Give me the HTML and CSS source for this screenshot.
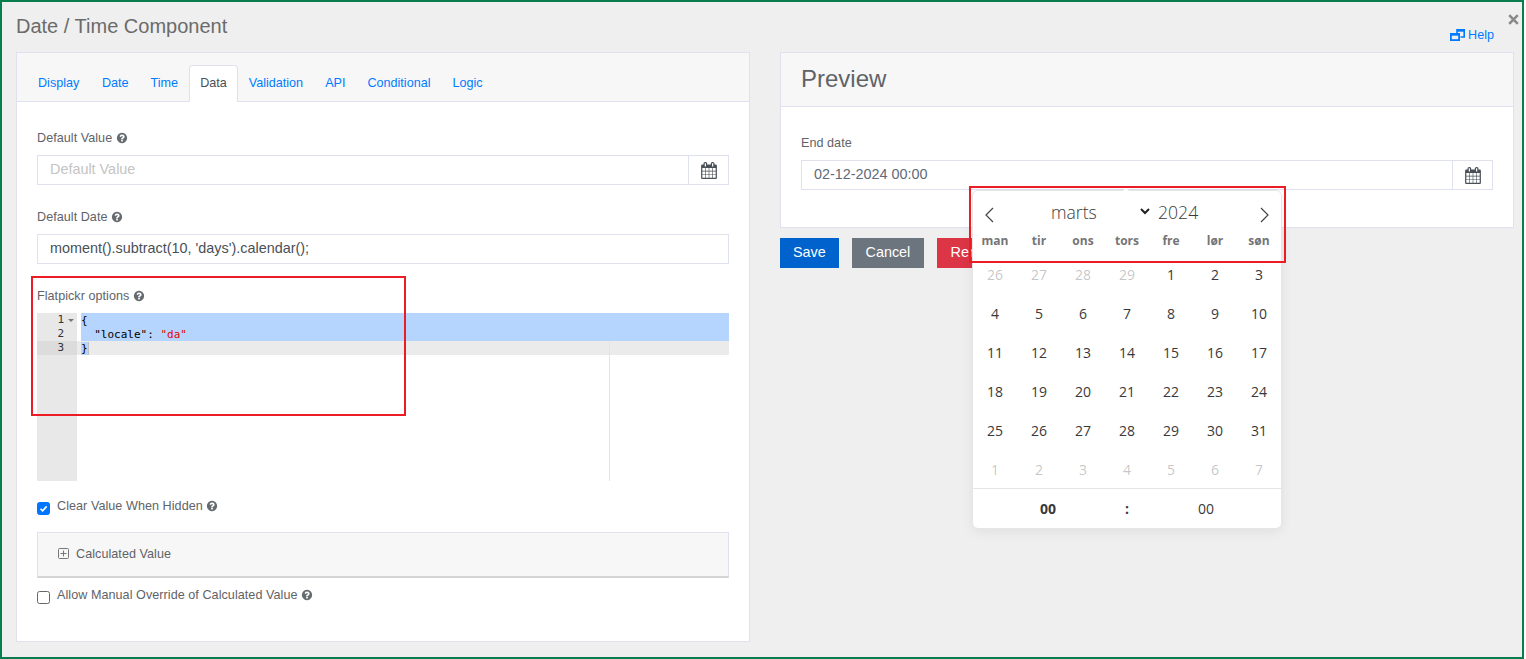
FILE: index.html
```html
<!DOCTYPE html>
<html lang="en">
<head>
<meta charset="utf-8">
<title>Date / Time Component</title>
<link rel="stylesheet" href="styles.css">
</head>
<body>
<svg class="sprite" width="0" height="0" aria-hidden="true">
  <symbol id="q" viewBox="0 0 1792 1792"><path d="M1024 1376v-192q0-14-9-23t-23-9h-192q-14 0-23 9t-9 23v192q0 14 9 23t23 9h192q14 0 23-9t9-23zm256-672q0-88-55.500-163t-138.500-116-170-41q-243 0-371 213-15 24 8 42l132 100q7 6 19 6 16 0 25-12 53-68 86-92 34-24 86-24 48 0 85.500 26t37.500 59q0 38-20 61t-68 45q-63 28-115.500 86.500t-52.500 125.500v36q0 14 9 23t23 9h192q14 0 23-9t9-23q0-19 21.500-49.500t54.500-49.500q32-18 49-28.500t46-35 44.500-48 28-60.500 12.500-81zm384 192q0 209-103 385.500t-279.500 279.500-385.500 103-385.500-103-279.500-279.500-103-385.500 103-385.500 279.500-279.500 385.500-103 385.500 103 279.500 279.500 103 385.500z"/></symbol>
  <symbol id="cal" viewBox="0 0 1664 1792"><path d="M128 1664h288v-288h-288v288zm352 0h320v-288h-320v288zm-352-352h288v-320h-288v320zm352 0h320v-320h-320v320zm-352-384h288v-288h-288v288zm736 736h320v-288h-320v288zm-384-736h320v-288h-320v288zm768 736h288v-288h-288v288zm-384-352h320v-320h-320v320zm-352-864v-288q0-13-9.500-22.500t-22.500-9.500h-64q-13 0-22.500 9.500t-9.500 22.500v288q0 13 9.500 22.500t22.500 9.500h64q13 0 22.500-9.500t9.500-22.500zm736 864h288v-320h-288v320zm-384-384h320v-288h-320v288zm384 0h288v-288h-288v288zm32-480v-288q0-13-9.500-22.500t-22.500-9.500h-64q-13 0-22.500 9.500t-9.500 22.500v288q0 13 9.500 22.500t22.500 9.500h64q13 0 22.500-9.500t9.500-22.500zm384-64v1280q0 52-38 90t-90 38h-1408q-52 0-90-38t-38-90v-1280q0-52 38-90t90-38h128v-96q0-66 47-113t113-47h64q66 0 113 47t47 113v96h384v-96q0-66 47-113t113-47h64q66 0 113 47t47 113v96h128q52 0 90 38t38 90z"/></symbol>
</svg>
<div class="page">
  <header class="top">
    <h1 class="title">Date / Time Component</h1>
    <a class="help" href="#">
      <svg class="help-ico" viewBox="0 0 15 12" aria-hidden="true"><path d="M7 4V.800h7.200V8H10.500" fill="none" stroke="#007bff" stroke-width="1.600"/><path d="M7 1.500h7" stroke="#007bff" stroke-width="2.400"/><rect x=".9" y="4.900" width="8.200" height="6.200" fill="none" stroke="#007bff" stroke-width="1.800"/><path d="M1 5.500h8" stroke="#007bff" stroke-width="2.400"/></svg>
      Help
    </a>
    <svg class="close" viewBox="0 0 11 11" aria-label="Close"><path d="M1.200 1.200l8.600 8.600M9.800 1.200l-8.600 8.600" fill="none" stroke="#8a8a8a" stroke-width="2.600"/></svg>
  </header>
  <main class="cols">
    <section class="card left">
      <nav class="tabs">
        <a class="tab first" href="#">Display</a>
        <a class="tab" href="#">Date</a>
        <a class="tab" href="#">Time</a>
        <a class="tab active" href="#">Data</a>
        <a class="tab" href="#">Validation</a>
        <a class="tab" href="#">API</a>
        <a class="tab" href="#">Conditional</a>
        <a class="tab" href="#">Logic</a>
      </nav>
      <div class="form">
        <div class="field">
          <div class="label">Default Value <svg class="q"><use href="#q"/></svg></div>
          <div class="group">
            <div class="input placeholder">Default Value</div>
            <div class="addon"><svg class="cal"><use href="#cal"/></svg></div>
          </div>
        </div>
        <div class="field">
          <div class="label">Default Date <svg class="q"><use href="#q"/></svg></div>
          <div class="input solo">moment().subtract(10, 'days').calendar();</div>
        </div>
        <div class="field editor-field">
          <div class="label">Flatpickr options <svg class="q"><use href="#q"/></svg></div>
          <div class="editor">
            <div class="gutter">
              <div class="gline">1<i class="fold"></i></div>
              <div class="gline">2</div>
              <div class="gline cur">3</div>
            </div>
            <div class="code">
              <div class="cline sel">{</div>
              <div class="cline sel">  "locale": <span class="str">"da"</span></div>
              <div class="cline act"><span class="bracket">}</span></div>
              <div class="margin"></div>
            </div>
          </div>
        </div>
        <label class="check one"><span class="box on"><svg viewBox="0 0 13 13"><path d="M3 6.800l2.500 2.500 4.700-5.300" fill="none" stroke="#fff" stroke-width="2"/></svg></span><span class="check-text">Clear Value When Hidden <svg class="q"><use href="#q"/></svg></span></label>
        <div class="panel"><svg class="plus" viewBox="0 0 11 11"><path d="M1.500.500h8a1 1 0 0 1 1 1v8a1 1 0 0 1-1 1h-8a1 1 0 0 1-1-1v-8a1 1 0 0 1 1-1zM5.500 2.500v6M2.500 5.500h6" fill="none" stroke="#777"/></svg><span class="panel-text">Calculated Value</span></div>
        <label class="check two"><span class="box"></span><span class="check-text">Allow Manual Override of Calculated Value <svg class="q"><use href="#q"/></svg></span></label>
      </div>
    </section>
    <div class="right">
      <section class="card">
        <h2 class="preview-head">Preview</h2>
        <div class="preview-body">
          <div class="label">End date</div>
          <div class="group">
            <div class="input value">02-12-2024 00:00</div>
            <div class="addon"><svg class="cal"><use href="#cal"/></svg></div>
          </div>
        </div>
      </section>
      <div class="btns">
        <button class="btn save">Save</button>
        <button class="btn cancel">Cancel</button>
        <button class="btn remove">Remove</button>
      </div>
    </div>
  </main>

  <div class="fp">
    <div class="fp-months">
      <svg class="nav prev" viewBox="0 0 10 16"><path d="M9 1L2 8l7 7" fill="none" stroke="#444" stroke-width="1.200"/></svg>
      <span class="month">marts</span>
      <svg class="chev" viewBox="0 0 10 7"><path d="M1 1l4 4 4-4" fill="none" stroke="#222" stroke-width="2"/></svg>
      <span class="year">2024</span>
      <svg class="nav next" viewBox="0 0 10 16"><path d="M1 1l7 7-7 7" fill="none" stroke="#444" stroke-width="1.200"/></svg>
    </div>
    <div class="fp-week"><span>man</span><span>tir</span><span>ons</span><span>tors</span><span>fre</span><span>lør</span><span>søn</span></div>
    <div class="fp-days">
      <span class="dim">26</span><span class="dim">27</span><span class="dim">28</span><span class="dim">29</span><span>1</span><span>2</span><span>3</span>
      <span>4</span><span>5</span><span>6</span><span>7</span><span>8</span><span>9</span><span>10</span>
      <span>11</span><span>12</span><span>13</span><span>14</span><span>15</span><span>16</span><span>17</span>
      <span>18</span><span>19</span><span>20</span><span>21</span><span>22</span><span>23</span><span>24</span>
      <span>25</span><span>26</span><span>27</span><span>28</span><span>29</span><span>30</span><span>31</span>
      <span class="dim">1</span><span class="dim">2</span><span class="dim">3</span><span class="dim">4</span><span class="dim">5</span><span class="dim">6</span><span class="dim">7</span>
    </div>
    <div class="fp-time"><b>00</b><b>:</b><span>00</span></div>
  </div>

  <div class="mark mark-a"></div>
  <div class="mark mark-b"></div>
</div>
</body>
</html>
```
FILE: styles.css
```css
* { box-sizing: border-box; }
html, body { margin: 0; padding: 0; background: #fff; }
body { font-family: "Liberation Sans", Arial, sans-serif; font-size: 12.6px; color: #5f6368; width: 1526px; height: 659px; overflow: hidden; }
.sprite { position: absolute; }
.page { position: relative; width: 1524px; height: 659px; border: 2px solid #0a7d4f; background: #efefef; padding: 0 8px 0 14px; }

.top { height: 50px; position: relative; display: flex; justify-content: space-between; }
.title { margin: 12px 0 0; font-size: 20px; line-height: 24px; font-weight: 400; color: #6b6b6b; }
.help { margin: 26px 20px 0 0; font-size: 12.6px; line-height: 14px; color: #007bff; text-decoration: none; height: 14px; display: flex; align-items: center; gap: 3px; }
.help-ico { width: 15px; height: 12px; }
.close { position: absolute; right: -5px; top: 12px; width: 11px; height: 11px; }

.cols { display: flex; gap: 30px; align-items: flex-start; }
.card { width: 734px; background: #fff; border: 1px solid #dfe2ee; }
.left { height: 590px; }
.right { width: 734px; }

.tabs { height: 49px; background: #f7f7f7; border-bottom: 1px solid #dfe2ee; padding: 12px 0 0 10px; display: flex; }
.tab { height: 37px; padding: 0 10px; line-height: 35px; color: #007bff; text-decoration: none; border: 1px solid transparent; border-bottom: 0; white-space: nowrap; }
.tab.first { padding-right: 10.700px; }
.tab.active { background: #fff; color: #495057; border-color: #dfe2ee; border-radius: 4px 4px 0 0; }

.form { padding: 0 20px; }
.field { padding-top: 29px; height: 79px; }
.label { line-height: 14px; height: 14px; color: #5f6368; margin-bottom: 10px; white-space: nowrap; letter-spacing: .04px; }
.q { width: 12px; height: 12px; fill: #666b70; vertical-align: -1.500px; margin-left: 0; }
.group { display: flex; }
.input { height: 30px; border: 1px solid #dfe2ee; padding: 0 12px; line-height: 26px; font-size: 14.4px; background: #fff; color: #495057; flex: 1; }
.placeholder { color: #c4c4c4; }
.value { color: #5f6a78; }
.addon { width: 41px; height: 30px; border: 1px solid #dfe2ee; margin-left: -1px; display: flex; align-items: center; justify-content: center; }
.cal { width: 16px; height: 17px; fill: #495057; }

.editor-field { height: auto; }
.editor { display: flex; height: 168px; background: #fff; font-family: "DejaVu Sans Mono", monospace; font-size: 11px; line-height: 14px; color: #000; }
.gutter { width: 40px; background: #e8e8e8; text-align: right; color: #333; }
.gline { height: 14px; padding-right: 13px; position: relative; }
.gline.cur { background: #dcdcdc; }
.fold { position: absolute; right: 3px; top: 6px; border: 3px solid transparent; border-top: 3px solid #777; border-bottom: 0; }
.code { flex: 1; position: relative; }
.cline { height: 14px; white-space: pre; line-height: 15px; }
.cline.sel { background: #b5d5ff; margin-left: 4px; }
.cline.act { background: #ebebeb; padding-left: 4px; }
.bracket { background: #b5d5ff; box-shadow: 1px 0 0 #c0c0c0; }
.str { color: #e60000; }
.margin { position: absolute; top: 28px; bottom: 0; left: 532px; width: 1px; background: #e4e4e4; }

.check { display: flex; align-items: flex-start; gap: 7px; }
.check.one { margin-top: 18px; }
.check.two { margin-top: 10px; }
.box { width: 13px; height: 13px; border: 1px solid #666; border-radius: 2.500px; background: #fff; margin-top: 3px; flex: none; }
.box.on { background: #0075ff; border-color: #0075ff; }
.box svg { display: block; width: 11px; height: 11px; }
.check-text { line-height: 14px; letter-spacing: .05px; }
.panel { margin-top: 17px; height: 46px; background: #f7f7f7; border: 1px solid #dfe2ee; border-bottom: 2px solid #d5d5d5; padding: 0 0 2px 20px; display: flex; align-items: center; gap: 7px; }
.panel-text { letter-spacing: .05px; }
.plus { width: 11px; height: 11px; }

.preview-head { margin: 0; height: 54px; background: #f7f7f7; border-bottom: 1px solid #dfe2ee; padding: 0 20px; font-size: 24px; line-height: 52px; font-weight: 400; color: #5f6368; }
.preview-body { padding: 29px 20px 37px; height: 120px; }

.btns { display: flex; gap: 13.400px; margin-top: 10px; }
.btn { height: 30px; border: 0; font: 14.4px/28px "Liberation Sans", Arial, sans-serif; color: #fff; padding: 0 13px 2px; }
.save { background: #0062cc; }
.cancel { background: #6c757d; padding: 0 13.300px 2px; }
.remove { background: #dc3545; margin-left: .500px; }

.fp { position: absolute; left: 971px; top: 189px; width: 308px; height: 337px; background: #fff; border-radius: 5px; font-family: "Open Sans", sans-serif; color: #393939; box-shadow: 1px 0 0 #e6e6e6, -1px 0 0 #e6e6e6, 0 1px 0 #e6e6e6, 0 -1px 0 #e6e6e6, 0 3px 13px rgba(0,0,0,.08); }
.fp::before { content: ""; position: absolute; left: 149px; top: -3px; border: 4px solid transparent; border-top: 0; border-bottom-color: #fff; }
.fp-months { height: 39px; display: flex; align-items: center; padding-top: 3px; }
.nav { width: 10px; height: 16px; flex: none; margin-top: 6px; }
.prev { margin-left: 11px; }
.month { font-size: 17.600px; font-weight: 300; margin-left: 57px; width: 89px; }
.chev { width: 10px; height: 7px; margin-top: -2px; }
.year { font-size: 17.600px; font-weight: 300; margin-left: 8px; }
.next { margin-left: 62px; }
.fp-week { display: grid; grid-template-columns: repeat(7, 44px); height: 25px; line-height: 22px; text-align: center; font-size: 12px; font-weight: 700; color: #757575; }
.fp-days { display: grid; grid-template-columns: repeat(7, 44px); grid-auto-rows: 39px; text-align: center; font-size: 14px; line-height: 39px; height: 233px; }
.dim { color: rgba(57,57,57,.3); }
.fp-time { display: grid; grid-template-columns: 150px 8px 150px; height: 40px; line-height: 40px; border-top: 1px solid #e6e6e6; font-size: 14px; text-align: center; color: #393939; }

.mark { position: absolute; border: 2px solid #ed1c24; pointer-events: none; }
.mark-a { left: 29px; top: 274px; width: 375px; height: 140px; }
.mark-b { left: 967px; top: 184px; width: 317px; height: 77px; }
```
